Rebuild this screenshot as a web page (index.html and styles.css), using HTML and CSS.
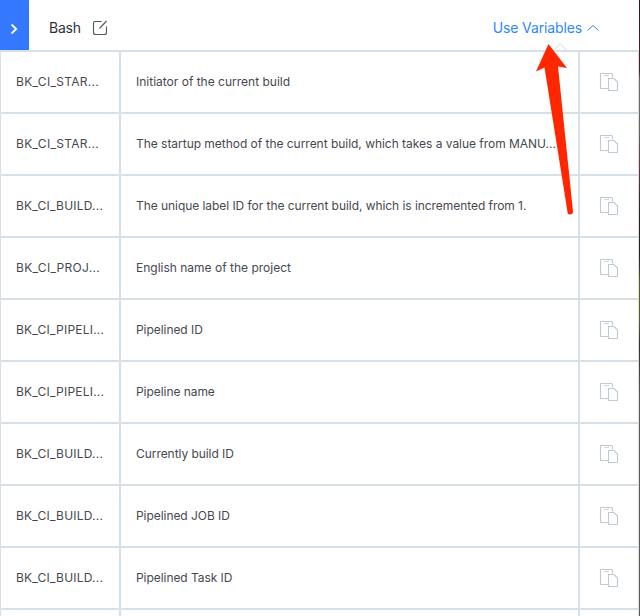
FILE: index.html
```html
<!DOCTYPE html>
<html lang="en">
<head>
<meta charset="utf-8">
<title>Variables</title>
<link rel="stylesheet" href="styles.css">
</head>
<body>
<svg class="symbols" aria-hidden="true">
  <symbol id="copy" viewBox="0 0 20 20">
    <path d="M9 16.500H2Q1.500 16.500 1.500 16V2Q1.500 1.500 2 1.500H12.500Q13.500 1.500 13.500 2.500V5.500"/>
    <path d="M5 3.500H10" opacity=".7"/>
    <path d="M9.500 6.500H15L18.500 10V18Q18.500 18.500 18 18.500H10Q9.500 18.500 9.500 18Z"/>
  </symbol>
</svg>
<div class="panel">
  <header class="header">
    <button class="toggle" aria-label="Expand"><svg viewBox="0 0 29 50"><path d="M11.500 24.500L16.200 29L11.500 33.500"/></svg></button>
    <h1 class="title">Bash</h1>
    <svg class="edit" viewBox="0 0 16 16"><path d="M9.500 1.500H3Q1.500 1.500 1.500 3V12.500Q1.500 14.500 3.500 14.500H12.500Q14.500 14.500 14.500 12.500V6.500M7.500 8.500L14.500 1"/></svg>
    <a class="use"><span>Use Variables</span><svg viewBox="0 0 12 8"><path d="M.5 6.500L6 1.500L11.500 6.500"/></svg></a>
  </header>
  <main class="table">
    <div class="row"><span class="cell name wide">BK_CI_STAR...</span><span class="cell short">Initiator of the current build</span><span class="cell icon"><svg><use href="#copy"/></svg></span></div>
    <div class="row"><span class="cell name wide">BK_CI_STAR...</span><span class="cell long">The startup method of the current build, which takes a value from MANU...</span><span class="cell icon"><svg><use href="#copy"/></svg></span></div>
    <div class="row"><span class="cell name">BK_CI_BUILD...</span><span class="cell">The unique label ID for the current build, which is incremented from 1.</span><span class="cell icon"><svg><use href="#copy"/></svg></span></div>
    <div class="row"><span class="cell name wide">BK_CI_PROJ...</span><span class="cell short">English name of the project</span><span class="cell icon"><svg><use href="#copy"/></svg></span></div>
    <div class="row"><span class="cell name">BK_CI_PIPELI...</span><span class="cell">Pipelined ID</span><span class="cell icon"><svg><use href="#copy"/></svg></span></div>
    <div class="row"><span class="cell name">BK_CI_PIPELI...</span><span class="cell">Pipeline name</span><span class="cell icon"><svg><use href="#copy"/></svg></span></div>
    <div class="row"><span class="cell name">BK_CI_BUILD...</span><span class="cell">Currently build ID</span><span class="cell icon"><svg><use href="#copy"/></svg></span></div>
    <div class="row"><span class="cell name">BK_CI_BUILD...</span><span class="cell">Pipelined JOB ID</span><span class="cell icon"><svg><use href="#copy"/></svg></span></div>
    <div class="row"><span class="cell name">BK_CI_BUILD...</span><span class="cell">Pipelined Task ID</span><span class="cell icon"><svg><use href="#copy"/></svg></span></div>
    <div class="row"><span class="cell"></span><span class="cell"></span><span class="cell icon"></span></div>
  </main>
  <svg class="arrow" viewBox="0 0 50 180"><path class="caret" d="M13.500 10L20 3.500L26.500 10"/><path class="pointer" d="M8.500 4L27 28L18 26.500L33 171.500Q33 174.500 30 174.500Q27.500 174.500 27.500 172L4.500 27.500L-4 31.500Z"/></svg>
</div>
</body>
</html>
```

FILE: styles.css
```css
* { box-sizing: border-box; }
body { margin: 0; background: #fff; font-family: Inter, "Liberation Sans", sans-serif; }
.symbols { position: absolute; width: 0; height: 0; }
.panel { position: relative; width: 640px; height: 616px; overflow: hidden; background: linear-gradient(#4a1018, #541a20 70px, #75685f 80px, #6e6259 130px, #753b38 160px, #2b201e 215px, #2b201e 255px, #66601f 285px, #66601f 320px, #382e28 345px, #675a51 400px, #675a51) right / 1px 100% no-repeat; }
svg { fill: none; }
.header { display: flex; align-items: center; width: 639px; height: 50px; padding-right: 40px; }
.toggle { width: 29px; height: 50px; padding: 0; border: 0; background: #3378ff; }
.toggle svg { display: block; width: 29px; height: 50px; stroke: #fff; stroke-width: 1.8; }
.title { width: 32px; margin: 6px 0 0 20px; font-size: 14px; line-height: 20px; font-weight: 400; letter-spacing: -.2px; color: #313238; }
.edit { width: 16px; height: 16px; margin: 6px 0 0 11px; stroke: #55565b; stroke-width: 1.1; }
.use { display: flex; align-items: center; gap: 5px; margin: 6px 0 0 auto; color: #2f87ff; font-size: 14px; line-height: 20px; letter-spacing: -.13px; }
.use svg { width: 12px; height: 8px; stroke: #2f87ff; }
.table { width: 639px; border: solid #d8e0e7; border-width: 2px 1px 0; }
.row { display: grid; grid-template-columns: 120px 459px 58px; height: 62px; border-bottom: 2px solid #d8e0e7; }
.cell { padding: 0 15px; border-right: 2px solid #d8e0e7; font-size: 12px; line-height: 60px; letter-spacing: -.055px; white-space: nowrap; color: #47484f; }
.short { letter-spacing: 0; }
.long { letter-spacing: -.03px; }
.name { letter-spacing: .22px; }
.wide { letter-spacing: .3px; }
.icon { display: flex; align-items: center; justify-content: center; padding: 0; border: 0; }
.icon svg { width: 20px; height: 20px; stroke: #bfc9d5; stroke-width: 1.1; }
.arrow { position: absolute; left: 540px; top: 40px; width: 50px; height: 180px; overflow: visible; }
.caret { fill: #fff; stroke: #d3dae1; }
.pointer { fill: #ff2600; }
```
